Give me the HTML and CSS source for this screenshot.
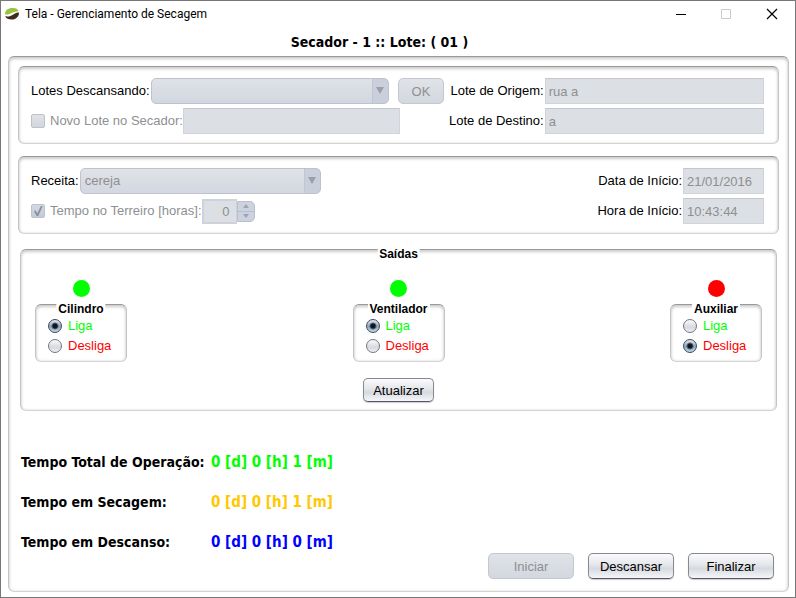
FILE: index.html
```html
<!DOCTYPE html>
<html lang="pt-BR">
<head>
<meta charset="utf-8">
<title>Tela - Gerenciamento de Secagem</title>
<link rel="stylesheet" href="styles.css">
</head>
<body>
<div class="window">
  <header class="titlebar">
    <svg class="logo" viewBox="0 0 16 14" aria-hidden="true">
      <path d="M1 7.400C1 2.500 5 1 9 1c3 0 5 1.100 5.500 2.900C12.500 4.700 10.500 4.500 8 5.700 5.500 6.900 4 7.900 1 7.400z" fill="#9ac23c"/>
      <path d="M15 5.400c0 4.800-3.500 7.100-7.500 7.100-3 0-5.500-.9-6.300-3.200 2.800.4 4.800 0 6.800-1.100C10 7.100 12 5.200 15 5.400z" fill="#41291b"/>
    </svg>
    <span class="title">Tela - Gerenciamento de Secagem</span>
    <div class="controls">
      <button type="button" aria-label="Minimizar"><svg viewBox="0 0 12 12"><path d="M0 6.500h10" stroke="#000"/></svg></button>
      <button type="button" aria-label="Maximizar" disabled><svg viewBox="0 0 12 12"><path d="M.5 1.500h9v9h-9z" stroke="#ccc" fill="none"/></svg></button>
      <button type="button" aria-label="Fechar"><svg viewBox="0 0 12 12"><path d="M1 1l10 10M11 1L1 11" stroke="#000" stroke-width="1.200"/></svg></button>
    </div>
  </header>

  <h1 class="heading">Secador - 1 :: Lote: ( 01 )</h1>

  <main class="panel main">
    <section class="panel form">
      <div class="stack lots">
        <div class="row">
          <label for="lotes">Lotes Descansando:</label>
          <span class="combo fill"><select id="lotes" disabled><option></option></select></span>
          <button type="button" class="btn ok" disabled>OK</button>
        </div>
        <div class="row short">
          <label class="check"><input type="checkbox" disabled>Novo Lote no Secador:</label>
          <input class="field novo" type="text" aria-label="Novo Lote no Secador" disabled>
        </div>
      </div>
      <div class="pairs wide">
        <label for="origem">Lote de Origem:</label>
        <input class="field" id="origem" type="text" value="rua a" disabled>
        <label for="destino">Lote de Destino:</label>
        <input class="field" id="destino" type="text" value="a" disabled>
      </div>
    </section>

    <section class="panel form">
      <div class="stack">
        <div class="row">
          <label for="receita">Receita:</label>
          <span class="combo"><select id="receita" disabled><option>cereja</option></select></span>
        </div>
        <div class="row">
          <label class="check"><input type="checkbox" checked disabled>Tempo no Terreiro [horas]:</label>
          <span class="spinner">
            <input type="text" value="0" aria-label="Tempo no Terreiro em horas" disabled>
            <span class="steps">
              <button type="button" class="up" aria-label="Aumentar" disabled></button>
              <button type="button" class="down" aria-label="Diminuir" disabled></button>
            </span>
          </span>
        </div>
      </div>
      <div class="pairs dates">
        <label for="data">Data de Início:</label>
        <input class="field" id="data" type="text" value="21/01/2016" disabled>
        <label for="hora">Hora de Início:</label>
        <input class="field" id="hora" type="text" value="10:43:44" disabled>
      </div>
    </section>

    <fieldset class="panel outputs">
      <legend>Saídas</legend>
      <div class="devices">
        <div class="device">
          <span class="lamp on"></span>
          <fieldset class="panel group">
            <legend>Cilindro</legend>
            <label class="liga"><input type="radio" name="cilindro" checked>Liga</label>
            <label class="desliga"><input type="radio" name="cilindro">Desliga</label>
          </fieldset>
        </div>
        <div class="device">
          <span class="lamp on"></span>
          <fieldset class="panel group">
            <legend>Ventilador</legend>
            <label class="liga"><input type="radio" name="ventilador" checked>Liga</label>
            <label class="desliga"><input type="radio" name="ventilador">Desliga</label>
          </fieldset>
        </div>
        <div class="device">
          <span class="lamp off"></span>
          <fieldset class="panel group">
            <legend>Auxiliar</legend>
            <label class="liga"><input type="radio" name="auxiliar">Liga</label>
            <label class="desliga"><input type="radio" name="auxiliar" checked>Desliga</label>
          </fieldset>
        </div>
      </div>
      <button type="button" class="btn update">Atualizar</button>
    </fieldset>

    <div class="bottom">
      <dl class="times">
        <dt>Tempo Total de Operação:</dt><dd class="total">0 [d] 0 [h] 1 [m]</dd>
        <dt>Tempo em Secagem:</dt><dd class="drying">0 [d] 0 [h] 1 [m]</dd>
        <dt>Tempo em Descanso:</dt><dd class="resting">0 [d] 0 [h] 0 [m]</dd>
      </dl>
      <div class="actions">
        <button type="button" class="btn" disabled>Iniciar</button>
        <button type="button" class="btn">Descansar</button>
        <button type="button" class="btn">Finalizar</button>
      </div>
    </div>
  </main>
</div>
</body>
</html>
```
FILE: styles.css
```css
* { box-sizing: border-box; }

body {
  margin: 0;
  background: #fff;
  color: #000;
  font: 13px/16px "Liberation Sans", Arial, sans-serif;
}

input, select, button { font: inherit; margin: 0; }
fieldset { margin: 0; min-width: 0; }

.window {
  display: flex;
  flex-direction: column;
  min-height: 100vh;
  padding: 0 6px 5px 7px;
  border: 1px solid #777;
}

/* Title bar */
.titlebar {
  display: flex;
  align-items: center;
  height: 25px;
  margin-left: -4px;
}
.logo { width: 16px; height: 14px; }
.title {
  margin-left: 5px;
  font: 12px/16px Roboto, sans-serif;
}
.controls { display: flex; gap: 33px; margin-left: auto; padding-right: 11px; }
.controls button {
  width: 12px;
  height: 12px;
  padding: 0;
  border: 0;
  background: none;
}
.controls svg { display: block; width: 12px; height: 12px; }

.heading {
  margin: 6px 38px 4px 0;
  font: bold 14px/20px "DejaVu Sans Condensed", Tahoma, sans-serif;
  text-align: center;
}

/* Rounded, sunken panel */
.panel {
  border: 1px solid #c4c4c4;
  border-top: 1px solid #999;
  border-bottom-color: #d4d4d4;
  border-radius: 6px;
  background: #fff;
  box-shadow: inset 0 2px 3px #ccc, inset 0 0 3px #ddd;
}
.main {
  display: flex;
  flex: 1;
  flex-direction: column;
  gap: 12px;
  padding: 9px;
}
.form {
  display: flex;
  gap: 5px;
  padding: 11px 14px 9px 12px;
}
.stack { display: flex; flex-direction: column; gap: 4px; }
.lots { width: 413px; }
.row {
  display: flex;
  align-items: center;
  height: 26px;
  white-space: nowrap;
}
.short { margin-right: 44px; }
.pairs {
  display: grid;
  grid-auto-rows: 26px;
  gap: 4px 1px;
  align-items: center;
}
.pairs label { text-align: right; white-space: nowrap; }
.wide { flex: 1; grid-template-columns: auto 1fr; }
.dates { grid-template-columns: auto 81px; margin-left: auto; }

/* Controls */
.field {
  width: 100%;
  height: 26px;
  padding: 0 3px;
  border: 1px solid #d0d3d9;
  border-top-color: #c4c8ce;
  border-radius: 0;
  background: #dce0e4;
  color: #8e8f91;
}
.novo { flex: 1; width: auto; min-width: 0; }

.combo {
  position: relative;
  width: 241px;
  height: 26px;
  margin-left: 1px;
}
.combo.fill { flex: 1; }
.combo select {
  width: 100%;
  height: 100%;
  padding: 0 20px 0 4px;
  appearance: none;
  border: 1px solid #bdc2ce;
  border-radius: 5px;
  background: linear-gradient(270deg, #c9cfdb 15px, #bfc6d3 15px, #bfc6d3 16px, transparent 16px), linear-gradient(#dfe2e6, #d3d7e0);
  color: #8e8f91;
  opacity: 1;
}
.combo::after {
  content: "";
  position: absolute;
  top: 9px;
  right: 5px;
  border: 4px solid transparent;
  border-top: 7px solid #9b9fa8;
  border-bottom: 0;
}

.btn {
  width: 86px;
  height: 26px;
  padding: 1px 0 0;
  border: 1px solid #858990;
  border-bottom-color: #535862;
  border-radius: 5px;
  background: linear-gradient(#fbfbfc, #e4e6ea 45%, #d6d9df 60%, #f4f6f9);
  box-shadow: 0 1px 1px #ccc;
  color: #000;
}
.btn:disabled {
  border-color: #c3c7d0;
  background: linear-gradient(#e0e3e7, #d3d7df);
  box-shadow: none;
  color: #8e8f91;
}
.btn.ok { width: 46px; margin-left: 9px; }

.check { display: flex; align-items: center; gap: 5px; color: #8e8f91; }
.check input {
  display: grid;
  place-items: center;
  width: 14px;
  height: 14px;
  appearance: none;
  border: 1px solid #bcc1cb;
  border-radius: 2px;
  background: linear-gradient(#e0e2e6, #d2d6de);
}
.check input:checked { background: linear-gradient(#d3d9e4, #c3cbd8); }
.check input:checked::after {
  content: "";
  width: 12px;
  height: 12px;
  background: #8d939d;
  clip-path: polygon(16% 50%, 30% 45%, 45% 68%, 74% 8%, 90% 8%, 52% 92%, 38% 92%);
}

.spinner { display: flex; align-items: center; }
.spinner input {
  width: 35px;
  height: 25px;
  padding: 0 6px;
  border: 2px solid #cfd2da;
  border-right-width: 1px;
  border-radius: 0;
  background: #dce0e4;
  color: #8e8f91;
  text-align: right;
}
.steps {
  display: flex;
  flex-direction: column;
  width: 18px;
  height: 21px;
  border: 1px solid #b9c0cd;
  border-radius: 0 5px 5px 0;
  background: #cdd3de;
}
.steps button {
  display: grid;
  flex: 1;
  place-items: center;
  padding: 0;
  border: 0;
  background: none;
}
.steps .up { border-bottom: 1px solid #b9c0cd; }
.steps button::after { content: ""; border: 3px solid transparent; }
.steps .up::after { border-top: 0; border-bottom: 4px solid #9ea4b0; }
.steps .down::after { border-bottom: 0; border-top: 4px solid #9ea4b0; }

/* Outputs */
.outputs {
  position: relative;
  margin: 3px 2px 0;
  padding: 30px 14px 8px;
}
legend {
  position: absolute;
  top: -2px;
  left: 50%;
  padding: 0 2px;
  transform: translateX(-50%);
  background: #fff;
  font: bold 12px/12px "Liberation Sans", Arial, sans-serif;
}
.devices { display: flex; justify-content: space-between; }
.device {
  display: flex;
  flex-direction: column;
  align-items: center;
  gap: 7px;
}
.lamp { width: 17px; height: 17px; border-radius: 50%; }
.on { background: #0f0; }
.off { background: #f00; }
.group {
  position: relative;
  display: flex;
  flex-direction: column;
  gap: 4px;
  width: 92px;
  height: 58px;
  padding: 13px 0 0 12px;
}
.group label { display: flex; align-items: center; gap: 6px; }
.liga { color: #0f0; }
.desliga { color: #f00; }
.group input {
  width: 14px;
  height: 14px;
  appearance: none;
  border: 1px solid #73777f;
  border-radius: 50%;
  background: linear-gradient(#fafafa, #d6d9df 60%, #eceef2);
}
.group input:checked {
  border-color: #3b4a5c;
  background: radial-gradient(circle, #10151b 2px, transparent 4px), linear-gradient(#e4ebf3, #8ea5bd 55%, #c2d6e8);
}
.update { display: block; width: 71px; height: 24px; margin: 16px auto 0; }

/* Totals and actions */
.bottom {
  display: flex;
  flex: 1;
  align-items: flex-end;
  justify-content: space-between;
  padding: 0 5px 3px 3px;
}
.times {
  display: grid;
  grid-template-columns: 190px auto;
  gap: 20px 0;
  margin: 0 0 27px;
  font: bold 14px/20px "DejaVu Sans Condensed", Tahoma, sans-serif;
  white-space: nowrap;
}
.times dd { margin: 0; font-size: 15px; }
.total { color: #0f0; }
.drying { color: #ffc800; }
.resting { color: #00f; }
.actions { display: flex; gap: 14px; }
```
